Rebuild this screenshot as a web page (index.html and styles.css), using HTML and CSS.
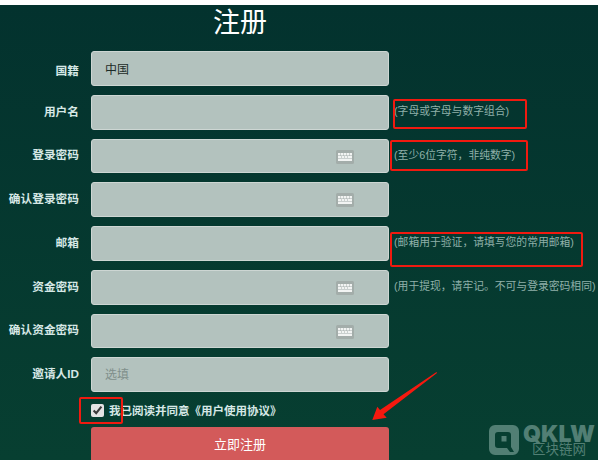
FILE: index.html
```html
<!DOCTYPE html>
<html>
    <head>
        <meta charset="utf-8">
        <title>注册</title>
        <link rel="stylesheet" href="styles.css">
    </head>
    <body>
        <svg class="none">
            <symbol id="keyboard" viewBox="0 0 18 14">
                <rect width="18" height="14" rx="1.5" fill="#a3adaa"/>
                <path d="M2 3h2.500v2.500H2zM5 3h2.500v2.500H5zM8 3h2.500v2.500H8zM11 3h2v2.500h-2zM13.500 3H16v2.500h-2.500zM2 6h3v2h-3zM5.500 6h2.500v2H5.500zM8.500 6h2.500v2H8.500zM11.500 6H16v2h-4.500zM2 8.500h14V11H2z" fill="#f2f4f3"/>
            </symbol>
        </svg>
        <div id="page">
            <h1 class="title">注册</h1>
            <form class="form">
                <div class="row row-first">
                    <label>国籍</label>
                    <div class="field"><input type="text" value="中国"></div>
                </div>
                <div class="row">
                    <label>用户名</label>
                    <div class="field"><input type="text"></div>
                    <span class="hint">(字母或字母与数字组合)</span>
                </div>
                <div class="row">
                    <label>登录密码</label>
                    <div class="field"><input type="password"><svg class="kb"><use href="#keyboard"/></svg></div>
                    <span class="hint">(至少6位字符，非纯数字)</span>
                </div>
                <div class="row">
                    <label>确认登录密码</label>
                    <div class="field"><input type="password"><svg class="kb"><use href="#keyboard"/></svg></div>
                </div>
                <div class="row">
                    <label>邮箱</label>
                    <div class="field"><input type="text"></div>
                    <span class="hint">(邮箱用于验证，请填写您的常用邮箱)</span>
                </div>
                <div class="row">
                    <label>资金密码</label>
                    <div class="field"><input type="password"><svg class="kb"><use href="#keyboard"/></svg></div>
                    <span class="hint">(用于提现，请牢记。不可与登录密码相同)</span>
                </div>
                <div class="row">
                    <label>确认资金密码</label>
                    <div class="field"><input type="password"><svg class="kb"><use href="#keyboard"/></svg></div>
                </div>
                <div class="row">
                    <label>邀请人ID</label>
                    <div class="field"><input type="text" placeholder="选填"></div>
                </div>
                <div class="agree">
                    <input type="checkbox" checked>
                    <span>我已阅读并同意《用户使用协议》</span>
                </div>
                <button type="button" class="submit">立即注册</button>
            </form>

            <!-- red marks drawn over the screenshot -->
            <div class="mark mark-user"></div>
            <div class="mark mark-pass"></div>
            <div class="mark mark-mail"></div>
            <div class="mark mark-check"></div>
            <svg class="arrow" viewBox="0 0 70 56">
                <polygon points="66.500,0 67,1 13.500,42.300 16.700,45.700 2.300,48 7.300,34.700 10,38" fill="#f5190f"/>
            </svg>

            <div class="logo">
                <svg class="logo-icon" viewBox="0 0 30 30">
                    <path fill-rule="evenodd" d="M6 0h18a6 6 0 0 1 6 6v18a6 6 0 0 1-6 6H6a6 6 0 0 1-6-6V6a6 6 0 0 1 6-6zM9 7a3 3 0 0 0-3 3v10a3 3 0 0 0 3 3h9l3 4h4l-3-5V10a3 3 0 0 0-3-3z" fill="#527f74"/>
                    <rect x="12.500" y="11" width="5" height="5.500" fill="#527f74"/>
                </svg>
                <div class="logo-text">
                    <b>QKLW</b>
                    <span>区块链网</span>
                </div>
            </div>
        </div>
    </body>
</html>
```

FILE: styles.css
```css
html, body {
    height: 100%;
}
body {
    background-color: white;
    margin: 0;
    padding-top: 5px;
    box-sizing: border-box;
    font-family: "Liberation Sans", "Noto Sans CJK SC", sans-serif;
    overflow: hidden;
}

.none {
    display: none;
}

#page {
    position: relative;
    height: 455px;
    overflow: hidden;
    background: linear-gradient(#03322e, #073f31);
}

.title {
    margin: 0 0 0 91px;
    width: 298px;
    height: 46px;
    font-size: 27px;
    font-weight: normal;
    line-height: 36px;
    text-align: center;
    color: white;
}

.form {
    display: flex;
    flex-direction: column;
    gap: 9px;
}

.row {
    display: flex;
    align-items: center;
    height: 34.75px;
}

.row label {
    width: 79px;
    margin: 0 12px 4px 0;
    font-size: 11.7px;
    font-weight: bold;
    text-align: right;
    color: #d6e8e6;
}

.row-first label {
    margin-bottom: -2px;
}

.field {
    position: relative;
    width: 298px;
    height: 100%;
}

.field input {
    width: 100%;
    height: 100%;
    box-sizing: border-box;
    margin: 0;
    padding: 0 13px;
    border: 1px solid #cdd6d3;
    border-radius: 3px;
    background-color: #b3c2be;
    font-family: inherit;
    font-size: 12px;
    color: #1c2b28;
}

.field input::placeholder {
    color: #7f8f8b;
}

.kb {
    position: absolute;
    left: 245px;
    top: 11px;
    width: 18px;
    height: 14px;
}

.hint {
    margin: 0 0 4px 5px;
    font-size: 10.8px;
    white-space: nowrap;
    color: #8fb0a9;
}

.agree {
    display: flex;
    align-items: center;
    height: 18px;
    margin: 0 0 0 91px;
    font-size: 11.5px;
    font-weight: bold;
    color: #d6e8e6;
}

.agree input {
    width: 13px;
    height: 13px;
    margin: 0 5px 0 0;
    accent-color: #e4e4e4;
}

.submit {
    width: 298px;
    height: 40px;
    margin: -1px 0 0 91px;
    padding: 0 0 7px;
    border: 0;
    border-radius: 3px 3px 0 0;
    background-color: #d35a5a;
    font-family: inherit;
    font-size: 13px;
    color: white;
}

.mark {
    position: absolute;
    box-sizing: border-box;
    border: 2px solid #f01a10;
    border-radius: 2px;
}
.mark-user {
    left: 393px;
    top: 94px;
    width: 134px;
    height: 30px;
}
.mark-pass {
    left: 390px;
    top: 135px;
    width: 138px;
    height: 31px;
}
.mark-mail {
    left: 390px;
    top: 227px;
    width: 193px;
    height: 35px;
}
.mark-check {
    left: 79px;
    top: 392px;
    width: 44px;
    height: 27px;
}

.arrow {
    position: absolute;
    left: 370px;
    top: 367px;
    width: 70px;
    height: 56px;
}

.logo {
    position: absolute;
    left: 489px;
    top: 420px;
    display: flex;
    gap: 4px;
    color: #527f74;
}
.logo-icon {
    width: 30px;
    height: 30px;
}
.logo-text {
    display: flex;
    flex-direction: column;
    align-items: center;
}
.logo-text b {
    font-family: Inter, sans-serif;
    font-size: 23px;
    font-weight: 900;
    line-height: 18px;
}
.logo-text span {
    font-size: 13.5px;
    line-height: 13px;
}
```
